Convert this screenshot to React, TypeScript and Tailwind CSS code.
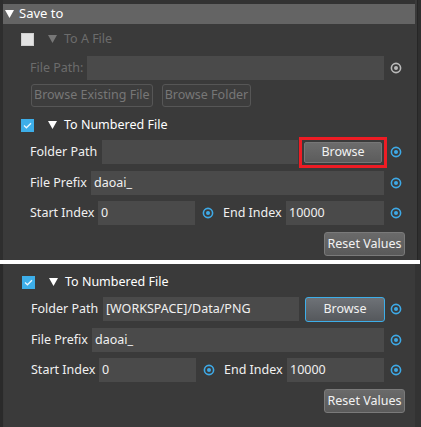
import React from 'react';

const font = { fontFamily: '"Noto Sans", "Open Sans", sans-serif' };

// small ring-with-dot indicator on the right of each field
const Dot = ({ on = true }: { on?: boolean }) => (
  <svg width="12" height="12" viewBox="0 0 12 12" className="shrink-0">
    <circle cx="6" cy="6" r="4.6" fill="none" stroke={on ? '#3ea9e6' : '#b9b9b9'} strokeWidth="1.6" />
    <circle cx="6" cy="6" r="2" fill={on ? '#3ea9e6' : '#b9b9b9'} />
  </svg>
);

const Tri = ({ dim = false }: { dim?: boolean }) => (
  <svg width="9" height="8" viewBox="0 0 9 8" className="shrink-0">
    <path d="M0 0 H9 L4.5 8 Z" fill={dim ? '#777777' : '#ffffff'} />
  </svg>
);

const Check = ({ on }: { on: boolean }) =>
  on ? (
    <div className="w-[13px] h-[13px] bg-[#3daee9] flex items-center justify-center shrink-0">
      <svg width="9" height="7" viewBox="0 0 9 7">
        <path d="M1 3.6 L3.4 5.8 L8 1.2" fill="none" stroke="#e8f6ff" strokeWidth="1.3" />
      </svg>
    </div>
  ) : (
    <div className="w-[13px] h-[13px] bg-[#e3e3e3] border border-[#cfcfcf] shrink-0" />
  );

const Field = ({ w, value = '', className = '' }: { w?: string; value?: string; className?: string }) => (
  <div className={`h-[24px] bg-[#4a4a4a] flex items-center pl-[3px] text-[12.5px] text-[#f0f0f0] ${w ?? 'flex-1'} ${className}`}>
    {value}
  </div>
);

const ResetBtn = () => (
  <div className="flex justify-end pr-[10px]">
    <div className="h-[24px] w-[81px] rounded-[3px] border border-[#7a7a7a] bg-gradient-to-b from-[#6a6a6a] to-[#5a5a5a] flex items-center justify-center text-[12.5px] text-[#f2f2f2]">
      Reset Values
    </div>
  </div>
);

const Numbered = ({ folder, browse }: { folder: string; browse: React.ReactNode }) => (
  <>
    <div className="h-[24px] flex items-center pl-[18px]">
      <Check on />
      <div className="ml-[14px]"><Tri /></div>
      <span className="ml-[7px] text-[12.5px] text-white">To Numbered File</span>
    </div>
    <div className="mt-[3px] h-[24px] flex items-center pl-[27px] pr-[13px]">
      <span className="w-[72px] text-[12.5px] text-[#f0f0f0]">Folder Path</span>
      <Field w="w-[196px]" value={folder} />
      {browse}
      <div className="ml-auto"><Dot /></div>
    </div>
    <div className="mt-[7px] h-[24px] flex items-center pl-[27px] pr-[13px]">
      <span className="w-[61px] text-[12.5px] text-[#f0f0f0]">File Prefix</span>
      <Field value="daoai_" />
      <div className="ml-[6px]"><Dot /></div>
    </div>
    <div className="mt-[6px] h-[24px] flex items-center pl-[27px] pr-[13px]">
      <span className="w-[68px] text-[12.5px] text-[#f0f0f0]">Start Index</span>
      <Field w="w-[97px]" value="0" />
      <div className="ml-[7px]"><Dot /></div>
      <span className="ml-[9px] w-[63px] text-[12.5px] text-[#f0f0f0]">End Index</span>
      <Field value="10000" />
      <div className="ml-[6px]"><Dot /></div>
    </div>
    <div className="mt-[7px]"><ResetBtn /></div>
  </>
);

export default function App() {
  return (
    <div className="w-[421px] h-[427px] bg-[#333333] flex flex-col overflow-hidden select-none" style={font}>
      {/* first capture */}
      <div className="h-[260px] flex">
        <div className="w-[3px] bg-[#2e2e2e]" />
        <div className="flex-1 bg-[#3a3a3a] flex flex-col pt-[4px] relative">
          <div className="absolute top-0 left-0 right-0 h-[4px] bg-[#333333]" />
          <div className="h-[20px] bg-[#646464] flex items-center pl-[2px]">
            <Tri />
            <span className="ml-[5px] text-[13px] text-white">Save to</span>
          </div>
          <div className="mt-[3px] h-[24px] flex items-center pl-[18px]">
            <Check on={false} />
            <div className="ml-[14px]"><Tri dim /></div>
            <span className="ml-[7px] text-[12.5px] text-[#6c6c6c]">To A File</span>
          </div>
          <div className="mt-[5px] h-[24px] flex items-center pl-[27px] pr-[13px]">
            <span className="w-[57px] text-[12.5px] text-[#6c6c6c]">File Path:</span>
            <Field />
            <div className="ml-[6px]"><Dot on={false} /></div>
          </div>
          <div className="mt-[4px] flex gap-[9px] pl-[28px]">
            <div className="h-[23px] px-[2px] rounded-[3px] border border-[#565656] bg-[#3d3d3d] flex items-center text-[12.5px] text-[#777777]">
              Browse Existing File
            </div>
            <div className="h-[23px] px-[2px] rounded-[3px] border border-[#565656] bg-[#3d3d3d] flex items-center text-[12.5px] text-[#777777]">
              Browse Folder
            </div>
          </div>
          <div className="mt-[6px]">
            <Numbered
              folder=""
              browse={
                <div className="ml-[1px] border-[3px] border-[#ee1c24] p-[2px]">
                  <div className="h-[21px] w-[78px] rounded-[2px] border border-[#777777] bg-gradient-to-b from-[#6c6c6c] to-[#5c5c5c] flex items-center justify-center text-[12.5px] text-[#f2f2f2]">
                    Browse
                  </div>
                </div>
              }
            />
          </div>
        </div>
        <div className="w-[6px] flex">
          <div className="w-[2px] bg-[#3a3a3a]" />
          <div className="w-[1px] bg-[#262626]" />
          <div className="flex-1 bg-[#2f2f2f]" />
        </div>
      </div>
      <div className="h-[4px] bg-white mr-[1px]" />
      {/* second capture */}
      <div className="flex-1 flex">
        <div className="w-[3px] bg-[#2a2a2a]" />
        <div className="w-[1px] bg-[#383838]" />
        <div className="flex-1 bg-[#3a3a3a] flex flex-col pt-[6px]">
          <Numbered
            folder="[WORKSPACE]/Data/PNG"
            browse={
              <div className="ml-[6px] h-[25px] w-[80px] rounded-[3px] border border-[#3daee9] bg-gradient-to-b from-[#6e7277] to-[#55585c] flex items-center justify-center text-[12.5px] text-[#f2f2f2]">
                Browse
              </div>
            }
          />
        </div>
        <div className="w-[6px] bg-[#333333]" />
      </div>
    </div>
  );
}
